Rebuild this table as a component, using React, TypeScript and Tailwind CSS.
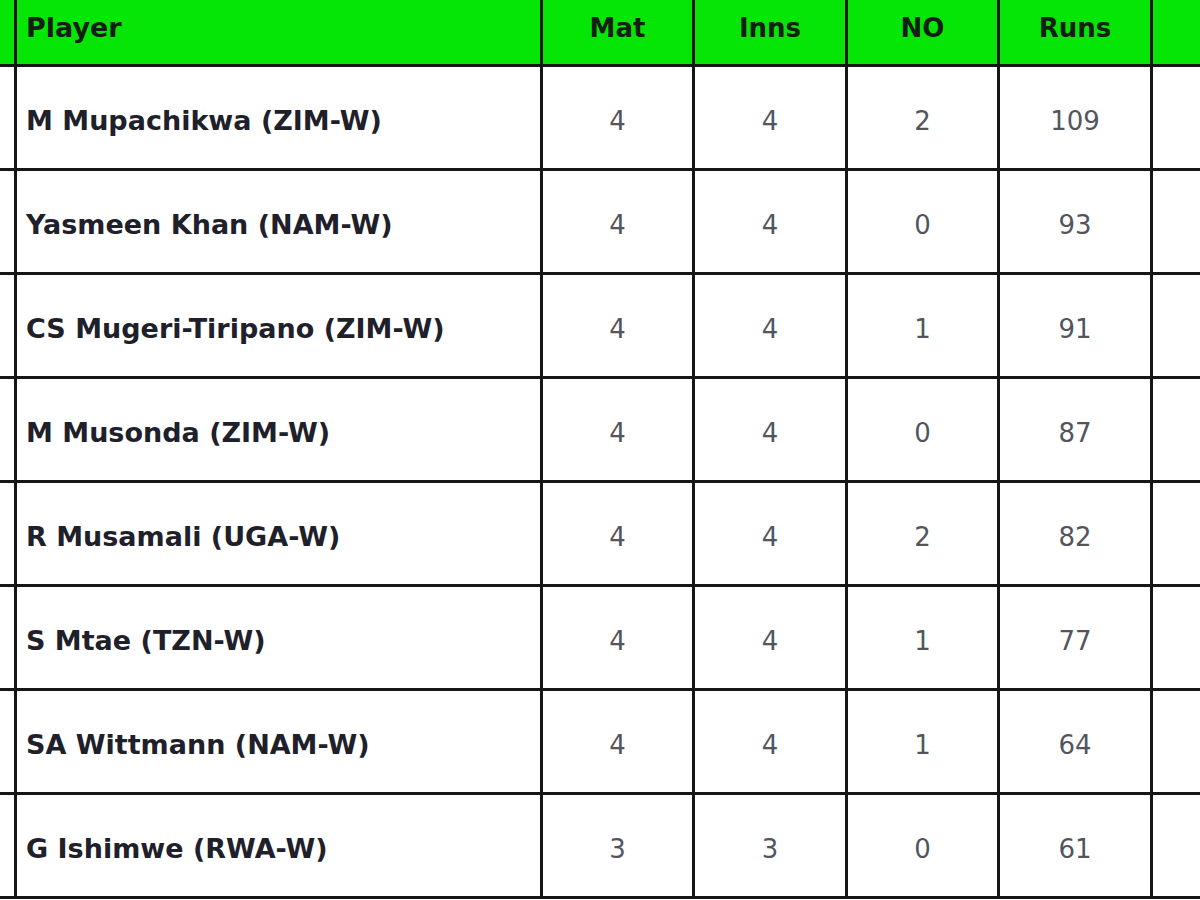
import React from 'react';

type Row = { player: string; mat: number; inns: number; no: number; runs: number };

const rows: Row[] = [
  { player: 'M Mupachikwa (ZIM-W)', mat: 4, inns: 4, no: 2, runs: 109 },
  { player: 'Yasmeen Khan (NAM-W)', mat: 4, inns: 4, no: 0, runs: 93 },
  { player: 'CS Mugeri-Tiripano (ZIM-W)', mat: 4, inns: 4, no: 1, runs: 91 },
  { player: 'M Musonda (ZIM-W)', mat: 4, inns: 4, no: 0, runs: 87 },
  { player: 'R Musamali (UGA-W)', mat: 4, inns: 4, no: 2, runs: 82 },
  { player: 'S Mtae (TZN-W)', mat: 4, inns: 4, no: 1, runs: 77 },
  { player: 'SA Wittmann (NAM-W)', mat: 4, inns: 4, no: 1, runs: 64 },
  { player: 'G Ishimwe (RWA-W)', mat: 3, inns: 3, no: 0, runs: 61 },
];

const cell = 'border-r-[3px] border-b-[3px] border-[#161616] flex items-center';
const head = `${cell} bg-[#06e606] h-[67px] pb-[8px] font-bold text-[#0f200f]`;
const body = `${cell} h-[104px] pt-[7px]`;

export default function App() {
  return (
    <div className="w-[1200px] h-[900px] overflow-hidden bg-white font-['DejaVu_Sans',sans-serif] text-[26px]">
      <div className="grid grid-cols-[17px_526px_152px_153px_152px_153px_1fr] w-[1240px]">
        <div className={head} />
        <div className={`${head} pl-[9px] text-[27px]`}>Player</div>
        <div className={`${head} justify-center`}>Mat</div>
        <div className={`${head} justify-center`}>Inns</div>
        <div className={`${head} justify-center`}>NO</div>
        <div className={`${head} justify-center`}>Runs</div>
        <div className={head} />

        {rows.map((r) => (
          <React.Fragment key={r.player}>
            <div className={body} />
            <div className={`${body} pl-[9px] font-bold text-[27px] text-[#20202a]`}>{r.player}</div>
            <div className={`${body} justify-center text-[#52555e]`}>{r.mat}</div>
            <div className={`${body} justify-center text-[#52555e]`}>{r.inns}</div>
            <div className={`${body} justify-center text-[#52555e]`}>{r.no}</div>
            <div className={`${body} justify-center text-[#52555e]`}>{r.runs}</div>
            <div className={body} />
          </React.Fragment>
        ))}
      </div>
    </div>
  );
}
